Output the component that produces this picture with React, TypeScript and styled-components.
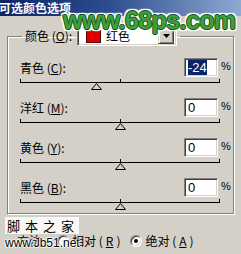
import React from "react";
import styled, { createGlobalStyle } from "styled-components";

const GlobalStyle = createGlobalStyle`
  html, body {
    margin: 0;
    padding: 0;
    background: #d4d0c8;
    overflow: hidden;
  }
  body {
    font-family: "Noto Sans CJK SC", "Liberation Sans", sans-serif;
    font-size: 12px;
    color: #000;
  }
`;

const Window = styled.div`
  position: relative;
  width: 241px;
  height: 254px;
  overflow: hidden;
  background: #d4d0c8;
`;

const TitleBar = styled.div`
  height: 16px;
  background: linear-gradient(90deg, #0a246a 0%, #2c4d8e 45%, #8ea9d2 100%);
  color: #fff;
  font-weight: bold;
  font-size: 12px;
  line-height: 16px;
  white-space: nowrap;
  text-indent: -1px;
`;

const Body = styled.div`
  padding: 10px 7px 0 7px;
`;

const GroupBox = styled.fieldset`
  margin: 0;
  width: 227px;
  box-sizing: border-box;
  padding: 12px 4px 4px 12px;
  border: 1px solid #808080;
  box-shadow: inset 1px 1px 0 #fff, 1px 1px 0 #fff;
`;

const Legend = styled.legend`
  margin-left: 2px;
  padding: 0 3px;
  height: 20px;
  display: flex;
  align-items: center;
  gap: 5px;
`;

const Label = styled.span<{ width?: number }>`
  white-space: nowrap;
  line-height: 14px;
  ${({ width }) => (width ? `width: ${width}px;` : "")}
`;

const Combo = styled.div`
  width: 100px;
  height: 20px;
  box-sizing: border-box;
  display: flex;
  align-items: center;
  background: #fff;
  border: 1px solid;
  border-color: #808080 #fff #fff #808080;
  box-shadow: inset 1px 1px 0 #404040, inset -1px -1px 0 #d4d0c8;
  padding: 2px 2px 2px 8px;
`;

const Swatch = styled.span<{ color: string }>`
  width: 13px;
  height: 11px;
  background: ${({ color }) => color};
  border: 1px solid #5a0000;
  margin-right: 5px;
`;

const ComboText = styled.span`
  flex: 1;
  line-height: 14px;
`;

const ArrowButton = styled.span`
  width: 16px;
  height: 16px;
  box-sizing: border-box;
  display: flex;
  align-items: center;
  justify-content: center;
  background: #d4d0c8;
  border: 1px solid;
  border-color: #d4d0c8 #404040 #404040 #d4d0c8;
  box-shadow: inset 1px 1px 0 #fff, inset -1px -1px 0 #808080;
`;

const Block = styled.div`
  & + & {
    margin-top: 9px;
  }
`;

const Row = styled.div`
  height: 19px;
  display: flex;
  align-items: center;
  justify-content: space-between;
  width: 209px;
`;

const ValueGroup = styled.div`
  display: flex;
  align-items: center;
`;

const Field = styled.div`
  width: 34px;
  height: 19px;
  box-sizing: border-box;
  background: #fff;
  border: 1px solid;
  border-color: #808080 #fff #fff #808080;
  box-shadow: inset 1px 1px 0 #404040, inset -1px -1px 0 #d4d0c8;
  padding: 2px 0 0 3px;
  font-family: "Liberation Sans", sans-serif;
  font-size: 13px;
  line-height: 14px;
`;

const Selected = styled.span`
  background: #0a246a;
  color: #fff;
`;

const Percent = styled.span`
  width: 8px;
  margin-left: 3px;
  margin-top: -4px;
  font-family: "Liberation Sans", sans-serif;
  font-size: 11px;
  line-height: 12px;
`;

const Track = styled.div`
  position: relative;
  width: 200px;
  height: 12px;
`;

const Line = styled.div`
  position: absolute;
  left: 0;
  right: 0;
  top: 5px;
  height: 1px;
  background: #000;
`;

const Tick = styled.div<{ at: number }>`
  position: absolute;
  top: 2px;
  left: ${({ at }) => at}px;
  width: 1px;
  height: 4px;
  background: #000;
`;

const Thumb = styled.svg`
  position: absolute;
  top: 6px;
`;

const MethodRow = styled.div`
  margin-top: 20px;
  padding-left: 10px;
  display: flex;
  align-items: center;
  height: 14px;
`;

const MethodLabel = styled.span`
  width: 40px;
  line-height: 14px;
`;

const RadioOption = styled.label`
  display: flex;
  align-items: center;
  gap: 3px;
  line-height: 14px;
  & + & {
    margin-left: 10px;
  }
`;

const RadioCircle = styled.span<{ checked?: boolean }>`
  width: 12px;
  height: 12px;
  box-sizing: border-box;
  border-radius: 50%;
  background: #fff;
  border: 1px solid;
  border-color: #808080 #fff #fff #808080;
  box-shadow: inset 1px 1px 0 #404040, inset -1px -1px 0 #d4d0c8;
  display: flex;
  align-items: center;
  justify-content: center;

  &::after {
    content: "";
    display: ${({ checked }) => (checked ? "block" : "none")};
    width: 4px;
    height: 4px;
    border-radius: 50%;
    background: #000;
  }
`;

const SiteMark = styled.div`
  position: absolute;
  left: 63px;
  top: 8px;
  font-family: "Liberation Sans", Arial, sans-serif;
  font-weight: bold;
  font-size: 25px;
  line-height: 25px;
  letter-spacing: -0.6px;
  color: #3f9f3a;
  white-space: nowrap;
  text-shadow: 1px 0 0 #14561a, -1px 0 0 #14561a, 0 1px 0 #14561a,
    0 -1px 0 #14561a, 2px 0 1px #fff, -2px 0 1px #fff, 0 2px 1px #fff,
    0 -2px 1px #fff, 2px 2px 1px #fff, -2px -2px 1px #fff, 2px -2px 1px #fff,
    -2px 2px 1px #fff;
`;

const StampName = styled.div`
  position: absolute;
  left: 5px;
  top: 217px;
  padding: 0 0 0 2px;
  height: 17px;
  background: rgba(250, 250, 248, 0.92);
  font-size: 13px;
  line-height: 17px;
  letter-spacing: 5px;
  white-space: nowrap;
`;

const StampUrl = styled.div`
  position: absolute;
  left: 5px;
  top: 236px;
  font-family: "Liberation Sans", sans-serif;
  font-size: 12px;
  line-height: 14px;
  color: #000;
  text-shadow: 1px 0 1px #fff, -1px 0 1px #fff, 0 1px 1px #fff, 0 -1px 1px #fff;
  white-space: nowrap;
`;

type Channel = { name: string; key: string; value: number; selected?: boolean };

const channels: Channel[] = [
  { name: "青色", key: "C", value: -24, selected: true },
  { name: "洋红", key: "M", value: 0 },
  { name: "黄色", key: "Y", value: 0 },
  { name: "黑色", key: "B", value: 0 },
];

const SliderRow: React.FC<{ ch: Channel }> = ({ ch }) => {
  const pos = Math.round(100 + ch.value);
  return (
    <Block>
      <Row>
        <Label>
          {ch.name} (<u>{ch.key}</u>):
        </Label>
        <ValueGroup>
          <Field>{ch.selected ? <Selected>{ch.value}</Selected> : ch.value}</Field>
          <Percent>%</Percent>
        </ValueGroup>
      </Row>
      <Track>
        <Line />
        <Tick at={0} />
        <Tick at={100} />
        <Tick at={199} />
        <Thumb width="11" height="7" viewBox="0 0 11 7" style={{ left: pos - 5 }}>
          <path d="M5.5 0.5 L10.5 6.5 L0.5 6.5 Z" fill="#d4d0c8" stroke="#000" strokeWidth="1" />
        </Thumb>
      </Track>
    </Block>
  );
};

const App: React.FC = () => {
  return (
    <Window>
      <GlobalStyle />
      <TitleBar>可选颜色选项</TitleBar>
      <Body>
        <GroupBox>
          <Legend>
            <Label width={47}>
              颜色 (<u>O</u>):
            </Label>
            <Combo>
              <Swatch color="#e00000" />
              <ComboText>红色</ComboText>
              <ArrowButton>
                <svg width="7" height="4" viewBox="0 0 7 4">
                  <path d="M0 0 H7 L3.5 4 Z" fill="#000" />
                </svg>
              </ArrowButton>
            </Combo>
          </Legend>
          {channels.map((ch) => (
            <SliderRow key={ch.key} ch={ch} />
          ))}
        </GroupBox>
        <MethodRow>
          <MethodLabel>方法:</MethodLabel>
          <RadioOption>
            <RadioCircle />
            相对 (<u>R</u>)
          </RadioOption>
          <RadioOption>
            <RadioCircle checked />
            绝对 (<u>A</u>)
          </RadioOption>
        </MethodRow>
      </Body>
      <SiteMark>www.68ps.com</SiteMark>
      <StampName>脚本之家</StampName>
      <StampUrl>www.Jb51.net</StampUrl>
    </Window>
  );
};

export default App;
